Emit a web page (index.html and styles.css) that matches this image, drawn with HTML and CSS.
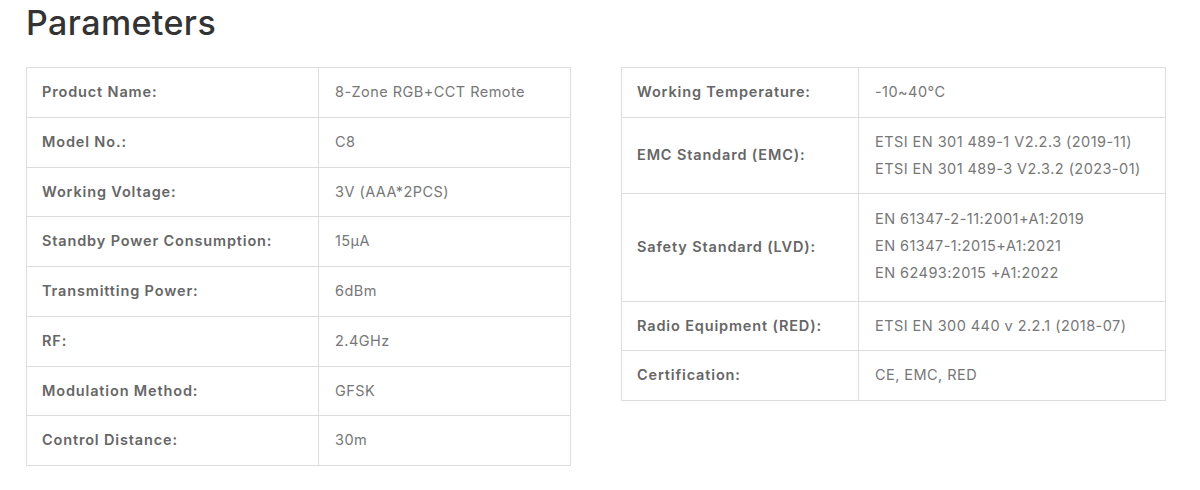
FILE: index.html
```html
<!DOCTYPE html>
<html>
<head>
<meta charset="utf-8">
<link rel="stylesheet" href="styles.css">
</head>
<body>
<div class="page">
  <h2 class="title">Parameters</h2>
  <div class="tables">
    <table class="spec spec-left">
      <tr><th>Product Name:</th><td>8-Zone RGB+CCT Remote</td></tr>
      <tr><th>Model No.:</th><td>C8</td></tr>
      <tr><th>Working Voltage:</th><td>3V (AAA*2PCS)</td></tr>
      <tr><th>Standby Power Consumption:</th><td>15μA</td></tr>
      <tr><th>Transmitting Power:</th><td>6dBm</td></tr>
      <tr><th>RF:</th><td>2.4GHz</td></tr>
      <tr><th>Modulation Method:</th><td>GFSK</td></tr>
      <tr><th>Control Distance:</th><td>30m</td></tr>
    </table>
    <table class="spec spec-right">
      <tr><th>Working Temperature:</th><td>-10~40°C</td></tr>
      <tr><th>EMC Standard (EMC):</th><td>ETSI EN 301 489-1 V2.2.3 (2019-11)<br>ETSI EN 301 489-3 V2.3.2 (2023-01)</td></tr>
      <tr class="tall"><th>Safety Standard (LVD):</th><td>EN 61347-2-11:2001+A1:2019<br>EN 61347-1:2015+A1:2021<br>EN 62493:2015 +A1:2022</td></tr>
      <tr><th>Radio Equipment (RED):</th><td>ETSI EN 300 440 v 2.2.1 (2018-07)</td></tr>
      <tr><th>Certification:</th><td>CE, EMC, RED</td></tr>
    </table>
  </div>
</div>
</body>
</html>
```
FILE: styles.css
```css
html, body {
  margin: 0;
  padding: 0;
  background: #ffffff;
}
body {
  font-family: Inter, "Open Sans", "Liberation Sans", sans-serif;
}
.page {
  padding: 0 0 0 26px;
  width: 1140px;
}
.title {
  margin: 0;
  box-sizing: border-box;
  padding-top: 3px;
  height: 67px;
  font-size: 34px;
  font-weight: 500;
  color: #333333;
  line-height: 40px;
  letter-spacing: 0.4px;
}
.tables {
  display: flex;
  gap: 50px;
  align-items: flex-start;
}
.spec {
  border-collapse: collapse;
  width: 545px;
  table-layout: fixed;
  font-size: 14.5px;
}
.spec th, .spec td {
  border: 1px solid #dddddd;
  padding: 11px 15px 11px 15px;
  line-height: 26.75px;
  text-align: left;
  vertical-align: middle;
}
.spec th {
  font-weight: 600;
  color: #666666;
  letter-spacing: 0.85px;
}
.spec td {
  font-weight: 400;
  color: #777777;
  padding-left: 16px;
  letter-spacing: 0.45px;
  font-variant-numeric: proportional-nums;
}
.spec-left th { width: 292px; box-sizing: border-box; }
.spec-right th { width: 237px; box-sizing: border-box; }
.spec-right tr.tall td { padding-top: 12px; padding-bottom: 14px; }
```
